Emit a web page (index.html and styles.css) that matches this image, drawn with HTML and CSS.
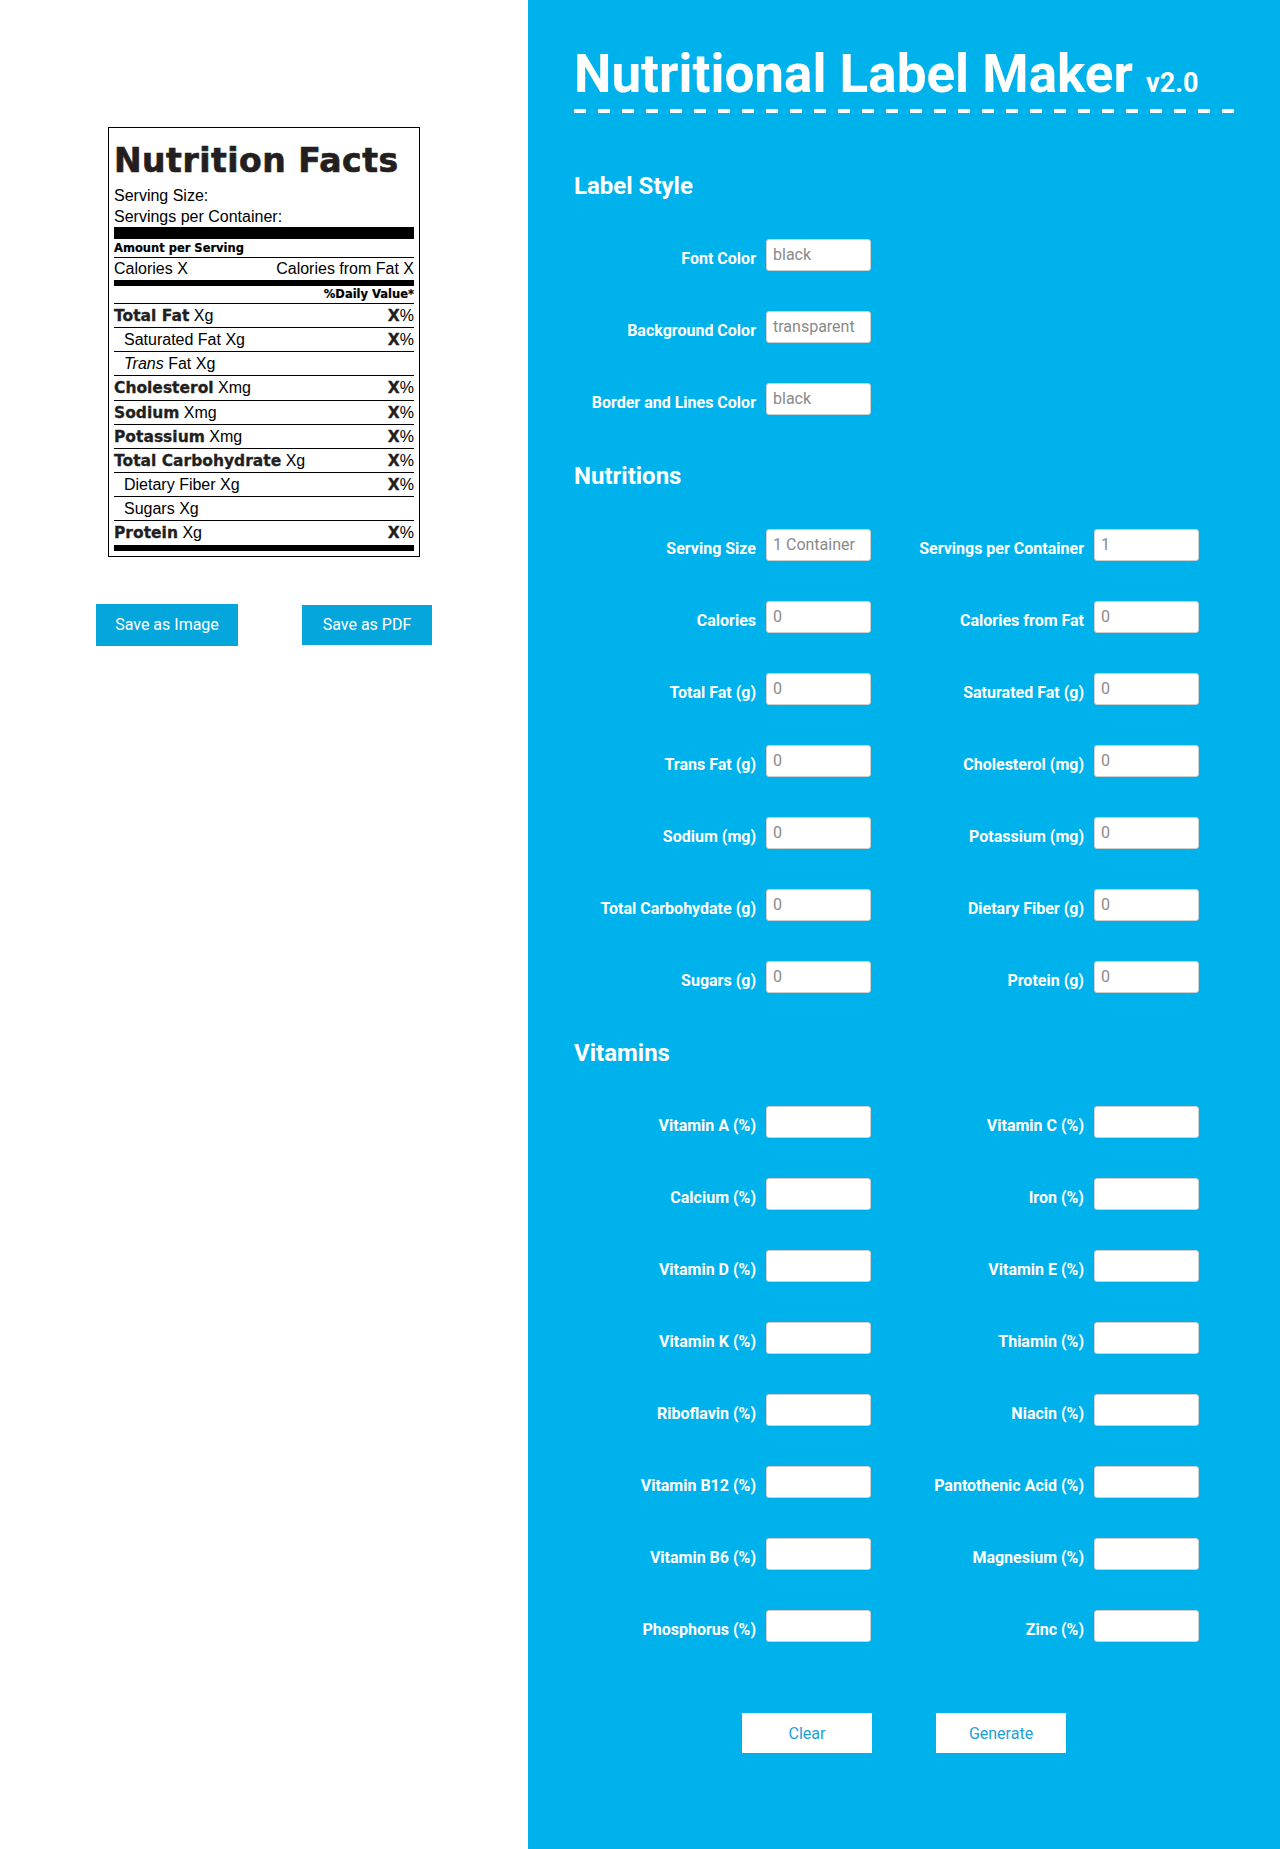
FILE: index.html
```html
<!DOCTYPE html>
<html lang="en">
<head>
<meta charset="utf-8">
<title>Nutritional Label Maker</title>
<link rel="stylesheet" href="styles.css">
</head>
<body>
<div class="page">
  <div class="preview">
    <div class="nf">
      <div class="nf-title">Nutrition Facts</div>
      <div class="nf-line">Serving Size:</div>
      <div class="nf-line nf-bar-lg">Servings per Container:</div>
      <div class="nf-small nf-pad">Amount per Serving</div>
      <div class="nf-cal"><span>Calories X</span><span>Calories from Fat X</span></div>
      <div class="nf-small nf-right">%Daily Value*</div>
      <div class="nf-row"><span><span class="nf-b">Total Fat</span> Xg</span><span><span class="nf-b">X</span>%</span></div>
      <div class="nf-row nf-sub"><span>Saturated Fat Xg</span><span><span class="nf-b">X</span>%</span></div>
      <div class="nf-row nf-sub"><span><i>Trans</i> Fat Xg</span></div>
      <div class="nf-row"><span><span class="nf-b">Cholesterol</span> Xmg</span><span><span class="nf-b">X</span>%</span></div>
      <div class="nf-row"><span><span class="nf-b">Sodium</span> Xmg</span><span><span class="nf-b">X</span>%</span></div>
      <div class="nf-row"><span><span class="nf-b">Potassium</span> Xmg</span><span><span class="nf-b">X</span>%</span></div>
      <div class="nf-row"><span><span class="nf-b">Total Carbohydrate</span> Xg</span><span><span class="nf-b">X</span>%</span></div>
      <div class="nf-row nf-sub"><span>Dietary Fiber Xg</span><span><span class="nf-b">X</span>%</span></div>
      <div class="nf-row nf-sub"><span>Sugars Xg</span></div>
      <div class="nf-row nf-last"><span><span class="nf-b">Protein</span> Xg</span><span><span class="nf-b">X</span>%</span></div>
    </div>
    <div class="save-row">
      <button class="btn-blue btn-img">Save as Image</button>
      <button class="btn-blue btn-pdf">Save as PDF</button>
    </div>
  </div>

  <div class="maker">
    <h1 class="title">Nutritional Label Maker <small>v2.0</small></h1>

    <section class="sec sec-first">
      <h2>Label Style</h2>
      <div class="grid grid-one">
        <div class="field"><label>Font Color</label><input type="text" placeholder="black"></div>
        <div class="field"><label>Background Color</label><input type="text" placeholder="transparent"></div>
        <div class="field"><label>Border and Lines Color</label><input type="text" placeholder="black"></div>
      </div>
    </section>

    <section class="sec">
      <h2>Nutritions</h2>
      <div class="grid">
        <div class="field"><label>Serving Size</label><input type="text" placeholder="1 Container"></div>
        <div class="field"><label>Servings per Container</label><input type="text" placeholder="1"></div>
        <div class="field"><label>Calories</label><input type="text" placeholder="0"></div>
        <div class="field"><label>Calories from Fat</label><input type="text" placeholder="0"></div>
        <div class="field"><label>Total Fat (g)</label><input type="text" placeholder="0"></div>
        <div class="field"><label>Saturated Fat (g)</label><input type="text" placeholder="0"></div>
        <div class="field"><label>Trans Fat (g)</label><input type="text" placeholder="0"></div>
        <div class="field"><label>Cholesterol (mg)</label><input type="text" placeholder="0"></div>
        <div class="field"><label>Sodium (mg)</label><input type="text" placeholder="0"></div>
        <div class="field"><label>Potassium (mg)</label><input type="text" placeholder="0"></div>
        <div class="field"><label>Total Carbohydate (g)</label><input type="text" placeholder="0"></div>
        <div class="field"><label>Dietary Fiber (g)</label><input type="text" placeholder="0"></div>
        <div class="field"><label>Sugars (g)</label><input type="text" placeholder="0"></div>
        <div class="field"><label>Protein (g)</label><input type="text" placeholder="0"></div>
      </div>
    </section>

    <section class="sec">
      <h2>Vitamins</h2>
      <div class="grid">
        <div class="field"><label>Vitamin A (%)</label><input type="text"></div>
        <div class="field"><label>Vitamin C (%)</label><input type="text"></div>
        <div class="field"><label>Calcium (%)</label><input type="text"></div>
        <div class="field"><label>Iron (%)</label><input type="text"></div>
        <div class="field"><label>Vitamin D (%)</label><input type="text"></div>
        <div class="field"><label>Vitamin E (%)</label><input type="text"></div>
        <div class="field"><label>Vitamin K (%)</label><input type="text"></div>
        <div class="field"><label>Thiamin (%)</label><input type="text"></div>
        <div class="field"><label>Riboflavin (%)</label><input type="text"></div>
        <div class="field"><label>Niacin (%)</label><input type="text"></div>
        <div class="field"><label>Vitamin B12 (%)</label><input type="text"></div>
        <div class="field"><label>Pantothenic Acid (%)</label><input type="text"></div>
        <div class="field"><label>Vitamin B6 (%)</label><input type="text"></div>
        <div class="field"><label>Magnesium (%)</label><input type="text"></div>
        <div class="field"><label>Phosphorus (%)</label><input type="text"></div>
        <div class="field"><label>Zinc (%)</label><input type="text"></div>
      </div>
    </section>

    <div class="actions">
      <button class="btn-white">Clear</button>
      <button class="btn-white">Generate</button>
    </div>
  </div>
</div>
</body>
</html>
```
FILE: styles.css
```css
* { box-sizing: border-box; }

body {
  margin: 0;
  font-family: Roboto, "Liberation Sans", sans-serif;
}

.page {
  display: grid;
  grid-template-columns: 528px 1fr;
  min-height: 100vh;
}

/* ---------- left: preview ---------- */
.preview {
  background: #fff;
  padding-top: 127px;
}

.nf {
  width: 312px;
  margin: 0 auto;
  border: 1px solid #000;
  padding: 0 5px 5px;
  font-family: "Liberation Sans", Arial, sans-serif;
  font-size: 16px;
  color: #000;
}

.nf-title {
  font-family: "DejaVu Sans", sans-serif;
  font-weight: 700;
  font-size: 33px;
  line-height: 33px;
  letter-spacing: 0.5px;
  margin: 16px 0 8px;
  color: #231f20;
  -webkit-text-stroke: 0.7px #231f20;
}

.nf-line { line-height: 21px; }

.nf-bar-lg { border-bottom: 12px solid #000; }

.nf-small {
  font-family: "DejaVu Sans", sans-serif;
  font-weight: 700;
  font-size: 11.5px;
  line-height: 17px;
  border-bottom: 1px solid #000;
  -webkit-text-stroke: 0.2px #000;
}

.nf-pad { padding-top: 1px; }

.nf-right { text-align: right; }

.nf-cal {
  display: flex;
  justify-content: space-between;
  line-height: 22px;
  border-bottom: 6px solid #000;
}

.nf-row {
  display: flex;
  justify-content: space-between;
  line-height: 23.15px;
  border-bottom: 1px solid #000;
}

.nf-row.nf-last { border-bottom: 6px solid #000; }

.nf-sub { padding-left: 10px; }

.nf-b {
  font-family: "DejaVu Sans", sans-serif;
  font-weight: 700;
  font-size: 15.5px;
  line-height: 1;
  color: #231f20;
  -webkit-text-stroke: 0.3px #231f20;
}

.save-row {
  display: flex;
  justify-content: center;
  align-items: center;
  gap: 64px;
  margin-top: 47px;
}

.btn-blue {
  background: #04a6dc;
  color: #fff;
  border: 0;
  font-family: Roboto, sans-serif;
  font-size: 16px;
  padding: 0;
}

.btn-img { width: 142px; height: 42px; }
.btn-pdf { width: 130px; height: 40px; }

/* ---------- right: maker ---------- */
.maker {
  background: #00b2ec;
  color: #fff;
  padding-bottom: 96px;
}

.title {
  position: relative;
  margin: 42px 0 0 46px;
  width: 660px;
  font-family: Roboto, sans-serif;
  font-weight: 700;
  font-size: 53px;
  line-height: 64px;
  padding-bottom: 7px;
  white-space: nowrap;
}

.title::after {
  content: "";
  position: absolute;
  left: 0;
  right: 0;
  bottom: 0;
  height: 4px;
  background: repeating-linear-gradient(to right, #fff 0 12px, transparent 12px 24px);
}

.title small {
  font-size: 27px;
  line-height: 1;
}

.sec { margin-top: 46.5px; }
.sec-first { margin-top: 59px; }

.sec h2 {
  font-family: Roboto, sans-serif;
  font-weight: 700;
  font-size: 24px;
  line-height: 28px;
  margin: 0 0 39px 46px;
}

.grid {
  display: grid;
  grid-template-columns: 328px 328px;
  row-gap: 40px;
  margin-left: 15px;
}

.grid-one { grid-template-columns: 328px; }

.field {
  display: flex;
  justify-content: flex-end;
  align-items: flex-end;
  gap: 10px;
}

.field label {
  font-family: Roboto, sans-serif;
  font-weight: 700;
  font-size: 16px;
  line-height: 24px;
  white-space: nowrap;
}

.field input {
  width: 105px;
  height: 32px;
  border: 1px solid #cfcfcf;
  border-radius: 3px;
  padding: 0 6px 1px;
  font-family: Roboto, sans-serif;
  font-size: 16px;
  color: #555;
  background: #fff;
}

.field input::placeholder { color: #8a8a8a; }

.actions {
  display: flex;
  justify-content: center;
  gap: 64px;
  margin-top: 71px;
}

.btn-white {
  width: 130px;
  height: 40px;
  background: #fff;
  color: #1c9fda;
  border: 0;
  padding: 0;
  font-family: Roboto, sans-serif;
  font-size: 16px;
}
```
